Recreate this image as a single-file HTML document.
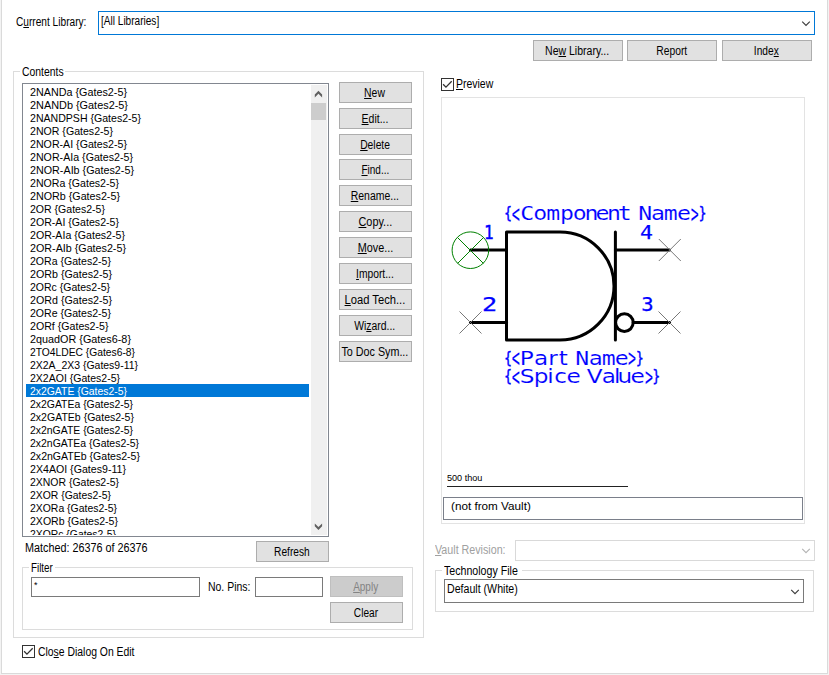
<!DOCTYPE html>
<html lang="en">
<head>
<meta charset="utf-8">
<title>Library Manager</title>
<style>
html,body{margin:0;padding:0;}
body{width:829px;height:675px;background:#fff;position:relative;overflow:hidden;
 font-family:"Liberation Sans",sans-serif;font-size:12.5px;color:#000;}
*{box-sizing:border-box;}
.abs{position:absolute;}
.t{position:absolute;white-space:nowrap;line-height:14px;height:14px;transform-origin:0 50%;}
u{text-decoration:underline;text-underline-offset:1px;text-decoration-thickness:1px;}
.wl{position:absolute;left:0;top:0;width:1px;height:675px;background:#f3f3f3;}
.wl2{position:absolute;left:1px;top:0;width:1px;height:674px;background:#dadada;}
.wr{position:absolute;left:827px;top:0;width:1px;height:674px;background:#dadada;}
.wr2{position:absolute;left:828px;top:0;width:1px;height:675px;background:#f3f3f3;}
.wb{position:absolute;left:1px;top:673px;width:827px;height:1px;background:#dadada;}
.wb2{position:absolute;left:0;top:674px;width:829px;height:1px;background:#f3f3f3;}
.grp{position:absolute;border:1px solid #dcdcdc;}
.glabel{position:absolute;background:#fff;white-space:nowrap;line-height:14px;height:14px;}
.glabel span{display:inline-block;transform-origin:0 50%;}
.btn{position:absolute;width:73px;height:21px;background:#e1e1e1;border:1px solid #adadad;
 display:flex;justify-content:center;line-height:19px;padding-top:1px;white-space:nowrap;overflow:visible;}
.btn span{display:block;flex:none;transform-origin:50% 50%;margin-right:1px;}
.btn.dis{background:#cccccc;border-color:#bfbfbf;color:#838383;}
.combo{position:absolute;background:#fff;border:1px solid #7a7a7a;}
.edit{position:absolute;background:#fff;border:1px solid #7a7a7a;}
.list{position:absolute;left:22px;top:83px;width:307px;height:454px;border:1px solid #828790;background:#fff;overflow:hidden;}
.list .rows{position:absolute;left:1px;top:1px;width:288px;height:450px;overflow:hidden;
 font-size:11px;line-height:13px;}
.list .rows div{height:13px;padding-left:4px;white-space:nowrap;margin-left:2px;width:283px;}
.list .rows div.sel{background:#0078d7;color:#fff;}
.list .rows span{display:inline-block;transform-origin:0 50%;position:relative;top:1px;}
.sb{position:absolute;left:288px;top:1px;width:16px;height:450px;background:#f0f0f0;}
.thumb{position:absolute;left:0;top:18px;width:15px;height:17px;background:#cdcdcd;}
.chk{position:absolute;width:13px;height:13px;border:1px solid #333;background:#fff;}
</style>
</head>
<body>
<div class="wl"></div><div class="wl2"></div><div class="wr"></div><div class="wr2"></div><div class="wb"></div><div class="wb2"></div>

<div class="t" id="t_curlib" style="left:16px;top:15px;transform:scaleX(0.8107);">C<u>u</u>rrent Library:</div>
<div class="combo" style="left:98px;top:11px;width:717px;height:24px;border-color:#0078d7"></div>
<div class="t" id="t_alllib" style="left:101px;top:14px;transform:scaleX(0.8055);">[All Libraries]</div>
<svg class="abs" style="left:800px;top:19px" width="12" height="8" viewBox="800 19 12 8"><path d="M802.2 21.6 L806 25.4 L809.8 21.6" fill="none" stroke="#3c3c3c" stroke-width="1.15"/></svg>

<div class="btn" style="left:533px;top:40px;width:90px"><span id="b_newlib" style="transform:scaleX(0.8413);">Ne<u>w</u> Library...</span></div>
<div class="btn" style="left:627px;top:40px;width:90px"><span id="b_report" style="transform:scaleX(0.8233);">Report</span></div>
<div class="btn" style="left:722px;top:40px;width:90px"><span id="b_index" style="transform:scaleX(0.8139);">Inde<u>x</u></span></div>

<div class="grp" style="left:13px;top:71px;width:411px;height:567px"></div>
<div class="glabel" style="left:20px;top:65px;width:45px"><span id="g_contents" style="margin-left:2px;transform:scaleX(0.8315);">Contents</span></div>

<div class="list">
<div class="rows">
<div><span id="r0" style="transform:scaleX(0.9792)">2NANDa {Gates2-5}</span></div>
<div><span id="r1" style="transform:scaleX(0.9893)">2NANDb {Gates2-5}</span></div>
<div><span id="r2" style="transform:scaleX(0.9605)">2NANDPSH {Gates2-5}</span></div>
<div><span id="r3" style="transform:scaleX(0.9627)">2NOR {Gates2-5}</span></div>
<div><span id="r4" style="transform:scaleX(0.9673)">2NOR-AI {Gates2-5}</span></div>
<div><span id="r5" style="transform:scaleX(0.9681)">2NOR-AIa {Gates2-5}</span></div>
<div><span id="r6" style="transform:scaleX(0.9775)">2NOR-AIb {Gates2-5}</span></div>
<div><span id="r7" style="transform:scaleX(0.9638)">2NORa {Gates2-5}</span></div>
<div><span id="r8" style="transform:scaleX(0.9746)">2NORb {Gates2-5}</span></div>
<div><span id="r9" style="transform:scaleX(0.9581)">2OR {Gates2-5}</span></div>
<div><span id="r10" style="transform:scaleX(0.9640)">2OR-AI {Gates2-5}</span></div>
<div><span id="r11" style="transform:scaleX(0.9649)">2OR-AIa {Gates2-5}</span></div>
<div><span id="r12" style="transform:scaleX(0.9751)">2OR-AIb {Gates2-5}</span></div>
<div><span id="r13" style="transform:scaleX(0.9598)">2ORa {Gates2-5}</span></div>
<div><span id="r14" style="transform:scaleX(0.9717)">2ORb {Gates2-5}</span></div>
<div><span id="r15" style="transform:scaleX(0.9549)">2ORc {Gates2-5}</span></div>
<div><span id="r16" style="transform:scaleX(0.9717)">2ORd {Gates2-5}</span></div>
<div><span id="r17" style="transform:scaleX(0.9598)">2ORe {Gates2-5}</span></div>
<div><span id="r18" style="transform:scaleX(0.9652)">2ORf {Gates2-5}</span></div>
<div><span id="r19" style="transform:scaleX(0.9830)">2quadOR {Gates6-8}</span></div>
<div><span id="r20" style="transform:scaleX(0.9349)">2TO4LDEC {Gates6-8}</span></div>
<div><span id="r21" style="transform:scaleX(0.9510)">2X2A_2X3 {Gates9-11}</span></div>
<div><span id="r22" style="transform:scaleX(0.9557)">2X2AOI {Gates2-5}</span></div>
<div class="sel"><span id="r23" style="transform:scaleX(0.9461)">2x2GATE {Gates2-5}</span></div>
<div><span id="r24" style="transform:scaleX(0.9481)">2x2GATEa {Gates2-5}</span></div>
<div><span id="r25" style="transform:scaleX(0.9573)">2x2GATEb {Gates2-5}</span></div>
<div><span id="r26" style="transform:scaleX(0.9481)">2x2nGATE {Gates2-5}</span></div>
<div><span id="r27" style="transform:scaleX(0.9498)">2x2nGATEa {Gates2-5}</span></div>
<div><span id="r28" style="transform:scaleX(0.9585)">2x2nGATEb {Gates2-5}</span></div>
<div><span id="r29" style="transform:scaleX(0.9650)">2X4AOI {Gates9-11}</span></div>
<div><span id="r30" style="transform:scaleX(0.9512)">2XNOR {Gates2-5}</span></div>
<div><span id="r31" style="transform:scaleX(0.9462)">2XOR {Gates2-5}</span></div>
<div><span id="r32" style="transform:scaleX(0.9484)">2XORa {Gates2-5}</span></div>
<div><span id="r33" style="transform:scaleX(0.9593)">2XORb {Gates2-5}</span></div>
<div><span id="r34" style="transform:scaleX(0.9439)">2XORc {Gates2-5}</span></div>
</div>
<div class="sb">
 <div class="thumb"></div>
 <svg class="abs" style="left:0;top:0" width="16" height="450" viewBox="0 0 16 450"><g fill="#606060"><polygon points="7.45,5.8 11.1,9.45 11.1,12.4 7.45,8.75 3.8,12.4 3.8,9.45"/><polygon points="3.8,438.4 7.45,442.05 11.1,438.4 11.1,441.35 7.45,445 3.8,441.35"/></g></svg>
</div>
</div>

<div class="btn" style="left:339px;top:82px;width:73px"><span id="b_new" style="transform:scaleX(0.8315);"><u>N</u>ew</span></div>
<div class="btn" style="left:339px;top:108px;width:73px"><span id="b_edit" style="transform:scaleX(0.8383);"><u>E</u>dit...</span></div>
<div class="btn" style="left:339px;top:134px;width:73px"><span id="b_delete" style="transform:scaleX(0.8246);"><u>D</u>elete</span></div>
<div class="btn" style="left:339px;top:159px;width:73px"><span id="b_find" style="transform:scaleX(0.8000);"><u>F</u>ind...</span></div>
<div class="btn" style="left:339px;top:185px;width:73px"><span id="b_rename" style="transform:scaleX(0.8358);"><u>R</u>ename...</span></div>
<div class="btn" style="left:339px;top:211px;width:73px"><span id="b_copy" style="transform:scaleX(0.8711);"><u>C</u>opy...</span></div>
<div class="btn" style="left:339px;top:237px;width:73px"><span id="b_move" style="transform:scaleX(0.8683);"><u>M</u>ove...</span></div>
<div class="btn" style="left:339px;top:263px;width:73px"><span id="b_import" style="transform:scaleX(0.8221);"><u>I</u>mport...</span></div>
<div class="btn" style="left:339px;top:289px;width:73px"><span id="b_load" style="transform:scaleX(0.8941);"><u>L</u>oad Tech...</span></div>
<div class="btn" style="left:339px;top:315px;width:73px"><span id="b_wizard" style="transform:scaleX(0.8312);">Wi<u>z</u>ard...</span></div>
<div class="btn" style="left:339px;top:341px;width:73px"><span id="b_todoc" style="transform:scaleX(0.8599);">To Doc Sym...</span></div>

<div class="t" id="t_matched" style="left:25px;top:541px;transform:scaleX(0.8633);">Matched: 26376 of 26376</div>
<div class="btn" style="left:256px;top:541px;width:73px"><span id="b_refresh" style="transform:scaleX(0.8131);">Refresh</span></div>

<div class="grp" style="left:22px;top:567px;width:391px;height:63px"></div>
<div class="glabel" style="left:29px;top:561px;width:26px"><span id="g_filter" style="margin-left:2px;transform:scaleX(0.7847);">Filter</span></div>
<div class="edit" style="left:31px;top:577px;width:169px;height:20px"></div>
<div class="t" id="t_star" style="left:34px;top:578px;font-size:9px">*</div>
<div class="t" id="t_pins" style="left:208px;top:580px;transform:scaleX(0.8360);">No. Pins:</div>
<div class="edit" style="left:255px;top:577px;width:68px;height:20px"></div>
<div class="btn dis" style="left:330px;top:576px;width:73px"><span id="b_apply" style="transform:scaleX(0.7992);"><u>A</u>pply</span></div>
<div class="btn" style="left:330px;top:602px;width:73px"><span id="b_clear" style="transform:scaleX(0.8100);">Clear</span></div>

<div class="chk" style="left:22px;top:645px"><svg width="11" height="11" viewBox="0 0 11 11" style="display:block"><path d="M1.1 5.3 L3.95 8.15 L9.7 2.2" fill="none" stroke="#333" stroke-width="1.3"/></svg></div>
<div class="t" id="t_close" style="left:38px;top:645px;transform:scaleX(0.8316);">Clo<u>s</u>e Dialog On Edit</div>

<div class="chk" style="left:441px;top:78px"><svg width="11" height="11" viewBox="0 0 11 11" style="display:block"><path d="M1.1 5.3 L3.95 8.15 L9.7 2.2" fill="none" stroke="#333" stroke-width="1.3"/></svg></div>
<div class="t" id="t_preview" style="left:456px;top:77px;transform:scaleX(0.8365);"><u>P</u>review</div>

<div class="abs" style="left:441px;top:97px;width:364px;height:427px;border:1px solid #e3e3e3;background:#fff"></div>

<svg class="abs" style="left:442px;top:98px" width="362" height="395" viewBox="442 98 362 395" font-family="'DejaVu Sans Mono','Liberation Mono',monospace">
 <g fill="none" stroke="#000" stroke-width="3" stroke-linecap="round" stroke-linejoin="round">
  <path d="M506.5 232 H560 A54 54 0 0 1 560 340 H506.5 Z"/>
  <path d="M615.4 232 V340"/>
  <path d="M470.5 250 H506.5"/>
  <path d="M470.5 322.5 H506.5"/>
  <path d="M615.4 250 H669.5"/>
  <path d="M633.2 322.5 H669.5"/>
  <circle cx="624.4" cy="322.6" r="8.8"/>
 </g>
 <g fill="none" stroke="#008000" stroke-width="1">
  <circle cx="470.4" cy="250.2" r="18.3"/>
  <path d="M457.5 237.5 L483.5 263.5 M457.5 263.5 L483.5 237.5"/>
 </g>
 <g fill="none" stroke="#787878" stroke-width="1">
  <path d="M459.5 311.5 L481.5 333.5 M459.5 333.5 L481.5 311.5"/>
  <path d="M658.8 239 L680.8 261 M658.8 261 L680.8 239"/>
  <path d="M658.5 311.5 L680.5 333.5 M658.5 333.5 L680.5 311.5"/>
 </g>
 <g fill="#0000ff" font-size="19" stroke="#fff" stroke-width="0.12">
  <text id="s_comp" y="220.4" transform="scale(1.22 1)"><tspan x="413.4" dy="-2.2" stroke="#0000ff" stroke-width="0.45" font-size="15" textLength="6.26" lengthAdjust="spacingAndGlyphs">{</tspan><tspan x="419.5" dy="4.6" font-size="26.5" textLength="6.69" lengthAdjust="spacingAndGlyphs">&lt;</tspan><tspan x="426.5 437.1 447.8 459.0 469.4 479.1 488.1 497.5 506.4" dy="-2.4">Component</tspan> <tspan x="523.1 533.6 544.0 555.0">Name</tspan><tspan x="566.1" dy="2.4" font-size="26.5" textLength="6.50" lengthAdjust="spacingAndGlyphs">&gt;</tspan><tspan x="572.7" dy="-4.6" stroke="#0000ff" stroke-width="0.45" font-size="15" textLength="6.26" lengthAdjust="spacingAndGlyphs">}</tspan></text>
  <text id="s_part" y="365.0" transform="scale(1.22 1)"><tspan x="413.4" dy="-2.2" stroke="#0000ff" stroke-width="0.45" font-size="15" textLength="6.26" lengthAdjust="spacingAndGlyphs">{</tspan><tspan x="419.5" dy="4.6" font-size="26.5" textLength="6.69" lengthAdjust="spacingAndGlyphs">&lt;</tspan><tspan x="426.1 437.7 449.4 458.0" dy="-2.4" font-family="DejaVu Sans, Liberation Sans, sans-serif">Part</tspan> <tspan x="471.5 482.6 493.2 503.9">Name</tspan><tspan x="514.8" dy="2.4" font-size="26.5" textLength="6.50" lengthAdjust="spacingAndGlyphs">&gt;</tspan><tspan x="521.3" dy="-4.6" stroke="#0000ff" stroke-width="0.45" font-size="15" textLength="6.26" lengthAdjust="spacingAndGlyphs">}</tspan></text>
  <text id="s_spice" y="383.4" transform="scale(1.22 1)"><tspan x="413.4" dy="-2.2" stroke="#0000ff" stroke-width="0.45" font-size="15" textLength="6.26" lengthAdjust="spacingAndGlyphs">{</tspan><tspan x="419.5" dy="4.6" font-size="26.5" textLength="6.69" lengthAdjust="spacingAndGlyphs">&lt;</tspan><tspan x="426.0 437.4 448.5 454.3 464.3" dy="-2.4" font-family="DejaVu Sans, Liberation Sans, sans-serif">Spice</tspan> <tspan x="480.9 493.2 503.2 506.2 516.8" font-family="DejaVu Sans, Liberation Sans, sans-serif">Value</tspan><tspan x="528.6" dy="2.4" font-size="26.5" textLength="6.50" lengthAdjust="spacingAndGlyphs">&gt;</tspan><tspan x="534.9" dy="-4.6" stroke="#0000ff" stroke-width="0.45" font-size="15" textLength="6.26" lengthAdjust="spacingAndGlyphs">}</tspan></text>
  <text x="484" y="239" stroke="#0000ff" stroke-width="0.5" font-size="20" textLength="9.6" lengthAdjust="spacingAndGlyphs">1</text>
  <text x="482" y="311.2" stroke="#0000ff" stroke-width="0.25" font-size="20" textLength="15.2" lengthAdjust="spacingAndGlyphs">2</text>
  <text x="641.2" y="311.2" stroke="#0000ff" stroke-width="0.25" font-size="20" textLength="12.4" lengthAdjust="spacingAndGlyphs">3</text>
  <text x="640.1" y="239" stroke="#0000ff" stroke-width="0.25" font-size="20" textLength="12.9" lengthAdjust="spacingAndGlyphs">4</text>
 </g>
</svg>

<div class="t" id="t_thou" style="left:447px;top:471px;font-size:9.7px;transform:scaleX(0.9385);">500 thou</div>
<div class="abs" style="left:447px;top:486px;width:181px;height:1px;background:#222"></div>

<div class="edit" style="left:443px;top:497px;width:360px;height:23px;border-color:#7a7f8a"></div>
<div class="t" id="t_vault" style="left:451px;top:499px;font-size:11px;transform:scaleX(1.0640);">(not from Vault)</div>

<div class="t" id="t_vrev" style="left:435px;top:543px;color:#a0a0a0;transform:scaleX(0.8561);"><u>V</u>ault Revision:</div>
<div class="combo" style="left:515px;top:540px;width:300px;height:21px;border-color:#d9d9d9"></div>
<svg class="abs" style="left:800px;top:546px" width="12" height="8" viewBox="800 546 12 8"><path d="M802.2 548.8 L806 552.6 L809.8 548.8" fill="none" stroke="#b4b4b4" stroke-width="1.15"/></svg>

<div class="grp" style="left:435px;top:570px;width:379px;height:42px"></div>
<div class="glabel" style="left:442px;top:564px;width:80px"><span id="g_tech" style="margin-left:2px;transform:scaleX(0.8496);">Technology File</span></div>
<div class="combo" style="left:444px;top:579px;width:360px;height:24px"></div>
<div class="t" id="t_default" style="left:447px;top:582px;transform:scaleX(0.8493);">Default (White)</div>
<svg class="abs" style="left:789px;top:587px" width="12" height="8" viewBox="789 587 12 8"><path d="M791.2 589.8 L795 593.6 L798.8 589.8" fill="none" stroke="#3c3c3c" stroke-width="1.15"/></svg>

</body>
</html>
